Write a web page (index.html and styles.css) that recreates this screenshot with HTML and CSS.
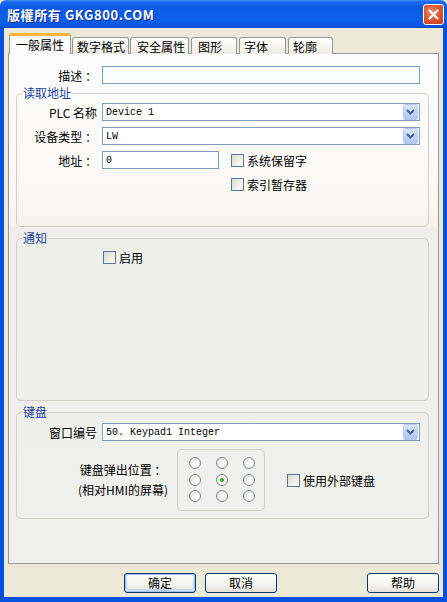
FILE: index.html
```html
<!DOCTYPE html>
<html lang="zh">
<head>
  <meta charset="UTF-8" />
  <title>一般属性</title>
  <link rel="stylesheet" href="styles.css">
</head>
<body>
  <div class="window">
    <div class="titlebar">
      <span class="title">版權所有 GKG800.COM</span>
      <span class="close">
        <svg width="11" height="11" viewBox="0 0 11 11"><path d="M1.5 1.5 L9.5 9.5 M9.5 1.5 L1.5 9.5" stroke="#fff" stroke-width="2.2" stroke-linecap="round"/></svg>
      </span>
    </div>

    <div class="frame">
      <div class="client">
        <div class="tabs">
          <span class="tab active">一般属性</span>
          <span class="tab t-num">数字格式</span>
          <span class="tab t-sec">安全属性</span>
          <span class="tab t-pic">图形</span>
          <span class="tab t-font">字体</span>
          <span class="tab t-out">轮廓</span>
        </div>

        <div class="panel">
          <div class="row desc">
            <span class="lbl lbl-top">描述 ：</span>
            <span class="field wide"></span>
          </div>

          <fieldset class="group g-read">
            <legend>读取地址</legend>
            <div class="row r-plc">
              <span class="lbl">PLC 名称</span>
              <div class="combo"><span class="value">Device 1</span><span class="drop"><svg width="9" height="6" viewBox="0 0 9 6"><path d="M1 1 L4.5 4.5 L8 1" fill="none" stroke="#4d6185" stroke-width="2"/></svg></span></div>
            </div>
            <div class="row r-next">
              <span class="lbl">设备类型 ：</span>
              <div class="combo"><span class="value">LW</span><span class="drop"><svg width="9" height="6" viewBox="0 0 9 6"><path d="M1 1 L4.5 4.5 L8 1" fill="none" stroke="#4d6185" stroke-width="2"/></svg></span></div>
            </div>
            <div class="row r-next">
              <span class="lbl">地址 ：</span>
              <span class="field short"><span class="value">0</span></span>
              <span class="check c-sys"><span class="box"></span>系统保留字</span>
            </div>
            <div class="row r-index">
              <span class="check c-index"><span class="box"></span>索引暂存器</span>
            </div>
          </fieldset>

          <fieldset class="group g-notify">
            <legend>通知</legend>
            <div class="row r-enable">
              <span class="check c-enable"><span class="box"></span>启用</span>
            </div>
          </fieldset>

          <fieldset class="group g-keys">
            <legend>键盘</legend>
            <div class="row r-win">
              <span class="lbl">窗口编号</span>
              <div class="combo"><span class="value">50. Keypad1 Integer</span><span class="drop"><svg width="9" height="6" viewBox="0 0 9 6"><path d="M1 1 L4.5 4.5 L8 1" fill="none" stroke="#4d6185" stroke-width="2"/></svg></span></div>
            </div>
            <div class="popup">
              <div class="popup-text">
                <div>键盘弹出位置 ：</div>
                <div>(相对HMI的屏幕)</div>
              </div>
              <div class="radios">
                <span class="radio"></span><span class="radio"></span><span class="radio"></span>
                <span class="radio"></span><span class="radio on"></span><span class="radio"></span>
                <span class="radio"></span><span class="radio"></span><span class="radio"></span>
              </div>
              <span class="check c-ext"><span class="box"></span>使用外部键盘</span>
            </div>
          </fieldset>
        </div>

        <div class="buttons">
          <button class="btn default">确定</button>
          <button class="btn">取消</button>
          <button class="btn help">帮助</button>
        </div>
      </div>
    </div>
  </div>
</body>
</html>
```

FILE: styles.css
```css
* {
  box-sizing: border-box;
  margin: 0;
  padding: 0;
}

body {
  width: 447px;
  height: 602px;
  overflow: hidden;
  font-family: "Noto Sans CJK SC", "Liberation Sans", sans-serif;
  font-size: 12px;
  color: #000;
  background: #ece9d8;
}

.window {
  display: flex;
  flex-direction: column;
  height: 602px;
}

/* XP blue caption */
.titlebar {
  height: 28px;
  display: flex;
  align-items: center;
  justify-content: space-between;
  padding: 0 3px 0 7px;
  background: linear-gradient(to bottom, #3d8ff8 0, #1a68ee 2px, #0b5ae6 8px, #0c5fea 20px, #0a55df 26px, #0645cc 28px);
  border-radius: 6px 6px 0 0;
}

.title {
  color: #fff;
  font-size: 13px;
  font-weight: bold;
  letter-spacing: 0.6px;
  text-shadow: 1px 1px 0 #0a2a8a;
}

.close {
  width: 21px;
  height: 21px;
  display: flex;
  align-items: center;
  justify-content: center;
  border: 1px solid #fff;
  border-radius: 3px;
  background: radial-gradient(circle at 40% 35%, #f08a6a 0, #e05a36 45%, #c23a12 100%);
}

.frame {
  flex: 1;
  border: solid #0552e0;
  border-width: 0 4px 5px 4px;
  box-shadow: inset 1px 0 0 #0b5eea, inset -1px 0 0 #0b5eea;
}

.client {
  height: 100%;
  padding: 5px 4px 0 4px;
  background: #ece9d8;
}

/* tab strip */
.tabs {
  display: flex;
  align-items: flex-end;
  height: 21px;
  margin-bottom: -1px;
  padding-left: 1px;
}

.tab {
  height: 17px;
  margin-right: 1px;
  padding-left: 4px;
  line-height: 17px;
  border: 1px solid #919b9c;
  border-bottom: none;
  border-radius: 3px 3px 0 0;
  background: linear-gradient(to bottom, #fff 0, #f4f3ee 60%, #ebeae2 100%);
  white-space: nowrap;
}

.tab.active {
  position: relative;
  z-index: 1;
  width: 62px;
  height: 21px;
  margin-right: 1px;
  padding-left: 6px;
  line-height: 18px;
  border-top: 3px solid #f5b63a;
  background: #fcfcfe;
}

.t-num { width: 57px; }
.t-sec { width: 59px; padding-left: 6px; margin-right: 2px; }
.t-pic { width: 46px; padding-left: 6px; margin-right: 2px; }
.t-font { width: 47px; margin-right: 2px; }
.t-out { width: 45px; }

.panel {
  width: 431px;
  height: 511px;
  border: 1px solid #919b9c;
  padding-top: 12px;
  background: linear-gradient(to bottom, #fdfdfe 0, #faf9f6 120px, #f6f4ec 172px, #eeeeeb 174px, #f0f0ee 100%);
}

.row {
  display: flex;
  align-items: center;
  height: 18px;
}

.lbl {
  width: 80px;
  margin-right: 5px;
  text-align: right;
  white-space: nowrap;
}

.lbl-top {
  width: 88px;
}

.field,
.combo {
  height: 18px;
  border: 1px solid #7f9db9;
  background: #fff;
  display: flex;
  align-items: center;
}

.field.wide {
  width: 318px;
  background: #fafcfe;
}

.field.short {
  width: 117px;
}

.combo {
  width: 318px;
  justify-content: space-between;
  padding-right: 1px;
}

.value {
  padding-left: 3px;
  font-family: "Liberation Mono", monospace;
  font-size: 10px;
}

.drop {
  width: 15px;
  height: 16px;
  display: flex;
  align-items: center;
  justify-content: center;
  border: 1px solid #b9cdf7;
  border-radius: 2px;
  background: linear-gradient(to bottom, #dbe6fe 0, #c3d4fb 50%, #b0c6f6 100%);
}

/* group boxes */
.group {
  margin: 2px 9px 0 7px;
  padding: 0;
  border: 1px solid #d0d0c6;
  border-radius: 5px;
  min-width: 0;
}

.group legend {
  margin-left: 5px;
  padding: 0 1px;
  line-height: 14px;
  color: #1b3f9c;
}

.g-read { padding-bottom: 33px; }
.g-notify { margin-top: 4px; padding-bottom: 134px; }
.g-keys { margin-top: 4px; padding-bottom: 7px; }

.r-plc { margin-top: 3px; }
.r-next { margin-top: 6px; }
.r-index { margin-top: 6px; }
.r-enable { margin-top: 3px; }
.r-win { margin-top: 4px; }

.check {
  display: flex;
  align-items: center;
  gap: 3px;
  white-space: nowrap;
}

.box {
  width: 13px;
  height: 13px;
  border: 1px solid #5b7896;
  background: linear-gradient(135deg, #d9d9d2 0, #eeeee9 50%, #fbfbfa 100%);
}

.c-sys { margin-left: 12px; }
.c-index { margin-left: 214px; }
.c-enable { margin-left: 86px; }
.c-ext { margin-left: 22px; }

/* keyboard position picker */
.popup {
  display: flex;
  align-items: center;
  margin-top: 8px;
}

.popup-text {
  width: 94px;
  margin-left: 59px;
  line-height: 20px;
  text-align: center;
  white-space: nowrap;
}

.radios {
  width: 88px;
  height: 62px;
  margin-left: 7px;
  padding: 7px 0 0 11px;
  display: grid;
  grid-template-columns: repeat(3, 12px);
  grid-auto-rows: 12px;
  column-gap: 15px;
  row-gap: 4.5px;
  border: 1px solid #d0d0c6;
  border-radius: 5px;
}

.radio {
  width: 12px;
  height: 12px;
  border: 1px solid #7d8a94;
  border-radius: 50%;
  background: radial-gradient(circle at 65% 65%, #fff 0, #f0f0ec 50%, #dcdcd6 100%);
  display: flex;
  align-items: center;
  justify-content: center;
}

.radio.on::after {
  content: '';
  width: 4px;
  height: 4px;
  border-radius: 50%;
  background: #2ea52e;
}

/* dialog buttons */
.buttons {
  display: flex;
  margin-top: 9px;
  padding-left: 116px;
}

.btn {
  width: 72px;
  height: 20px;
  margin-right: 9px;
  font-family: "Noto Sans CJK SC", sans-serif;
  font-size: 12px;
  line-height: 16px;
  color: #000;
  border: 1px solid #003c74;
  border-radius: 3px;
  background: linear-gradient(to bottom, #fff 0, #f3f3ef 60%, #e3e1d8 100%);
}

.btn.default {
  box-shadow: inset 0 0 0 1px #a8c4f0, inset 0 -1px 0 2px #c6d8f6;
}

.btn.help {
  margin-left: auto;
  margin-right: 0;
}
```
